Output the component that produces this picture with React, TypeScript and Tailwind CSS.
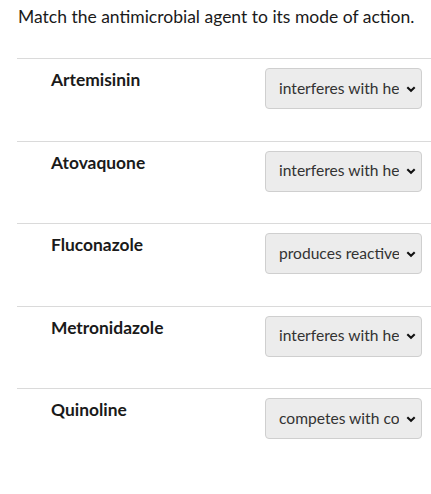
import React from "react";

const OPTIONS = [
  "interferes with heme detoxification",
  "produces reactive oxygen species",
  "competes with coenzyme Q",
  "inhibits ergosterol synthesis",
  "damages DNA after reduction",
];

const ROWS: { name: string; value: string }[] = [
  { name: "Artemisinin", value: OPTIONS[0] },
  { name: "Atovaquone", value: OPTIONS[0] },
  { name: "Fluconazole", value: OPTIONS[1] },
  { name: "Metronidazole", value: OPTIONS[0] },
  { name: "Quinoline", value: OPTIONS[2] },
];

function Chevron() {
  return (
    <svg
      width="10"
      height="10"
      viewBox="0 0 10 10"
      className="pointer-events-none absolute right-[6px] top-1/2 -translate-y-1/2"
    >
      <path d="M1.3 3.3 L5 6.8 L8.7 3.3" fill="none" stroke="#111" strokeWidth="2.1" />
    </svg>
  );
}

function Row({ name, value }: { name: string; value: string }) {
  return (
    <div className="flex h-[82.5px] items-start justify-between border-t border-[#dadada]">
      <div className="pl-[34px] pt-[9px] text-[17.4px] font-bold leading-[24px] text-[#1a1a1a]">
        {name}
      </div>
      <div className="relative mr-[9px] mt-[9px]">
        <select
          defaultValue={value}
          className="h-[41px] w-[157px] appearance-none rounded-[4px] border border-[#cfcfcf] bg-[#ececec] pl-[13px] pr-[22px] text-[15.6px] text-[#333] outline-none"
          style={{ fontFamily: "Lato, 'Liberation Sans', sans-serif" }}
        >
          {OPTIONS.map((o) => (
            <option key={o} value={o}>
              {o}
            </option>
          ))}
        </select>
        <Chevron />
      </div>
    </div>
  );
}

export default function App() {
  return (
    <div
      className="h-[494px] w-[431px] bg-white"
      style={{ fontFamily: "Lato, 'Liberation Sans', sans-serif" }}
    >
      <p className="pl-[18px] pt-[5px] text-[17.5px] leading-[24px] text-[#1a1a1a]">
        Match the antimicrobial agent to its mode of action.
      </p>
      <div className="ml-[17px] mt-[29px]">
        {ROWS.map((r) => (
          <Row key={r.name} name={r.name} value={r.value} />
        ))}
      </div>
    </div>
  );
}
